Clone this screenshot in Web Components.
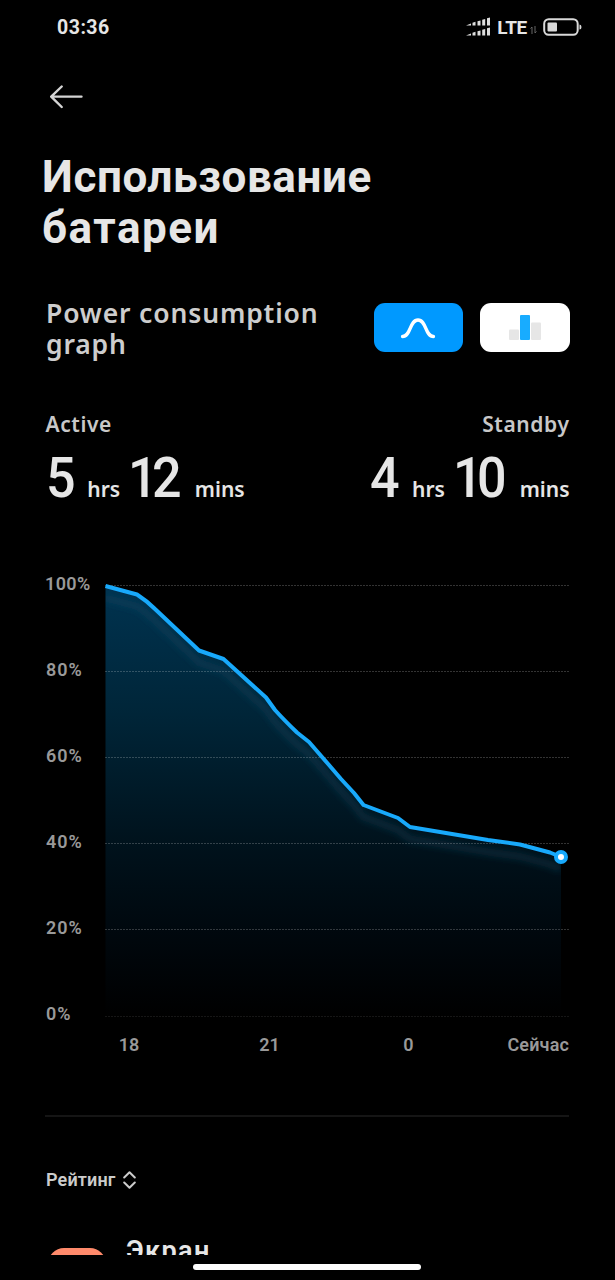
<!DOCTYPE html>
<html lang="ru">
<head>
<meta charset="utf-8">
<title>Использование батареи</title>
<style>
  html, body {
    margin: 0;
    background: #000;
  }

  body {
    width: 615px;
    height: 1280px;
    overflow: hidden;
    font-family: Roboto, "Liberation Sans", sans-serif;
    color: #e6e6e6;
  }
</style>
</head>
<body>
<battery-screen></battery-screen>

<script>
// Attaches an open shadow root and fills it with the given markup
function render(element, html) {
  element.attachShadow({ mode: 'open' }).innerHTML = html;
}

// Clock, signal and battery at the top of the screen
class StatusBar extends HTMLElement {
  constructor() {
    super();
    render(this, `
      <style>
        :host {
          display: flex;
          align-items: center;
          justify-content: space-between;
          box-sizing: border-box;
          height: 54px;
          padding: 0 33px 0 57px;
          font-weight: 700;
        }

        .time { font-size: 19.5px; letter-spacing: 0.5px; }
        .icons { display: flex; align-items: center; }
        .signal { margin-right: 7px; }
        .network { font-size: 19px; letter-spacing: -0.3px; }
        .data { margin: 6px 6px 0 3px; }
        svg { display: block; }
      </style>
      <span class="time"><slot></slot></span>
      <div class="icons">
        <svg class="signal" width="24" height="20" fill="#dedede">
          <path d="M0 8.500l5-2v2zM6.500 5.800l3-1v3.700h-3zM11.500 4.200l3-.8v5.100h-3zM16.200 2.700l3-.8v6.600h-3zM21 1.300l3-.8v8h-3z"/>
          <path d="M0 18.500l5-2v2zM6.500 15.800l3-1v3.700h-3zM11.500 14.200l3-.8v5.100h-3zM16.200 12.700l3-.8v6.600h-3zM21 11.300l3-.8v8h-3z"/>
        </svg>
        <span class="network">LTE</span>
        <svg class="data" width="7" height="8" fill="none" stroke="#666" stroke-width="1">
          <path d="M2 8V1L.5 2.5M5 0v7l1.500-1.500"/>
        </svg>
        <svg width="39" height="18">
          <rect x="1.200" y="1.200" width="33.500" height="15.600" rx="4.500" fill="none" stroke="#d9d9d9" stroke-width="2"/>
          <rect x="4.500" y="4.500" width="9.500" height="9" rx="1" fill="#d9d9d9"/>
          <path d="M36.500 6.500q2 0 2 2.500t-2 2.500z" fill="#d9d9d9"/>
        </svg>
      </div>
    `);
  }
}

class BackButton extends HTMLElement {
  constructor() {
    super();
    render(this, `
      <style>
        :host { display: block; }
        svg { display: block; }
      </style>
      <svg width="34" height="24" fill="none" stroke="#d4d4d4" stroke-width="2.400" stroke-linecap="round" stroke-linejoin="round">
        <path d="M31.500 11.600H1.500M11.700 1.500L1.200 11.600l10.500 10.400"/>
      </svg>
    `);
  }
}

// Pill holding a chart icon, blue while it is the selected one
class GraphToggle extends HTMLElement {
  constructor() {
    super();
    render(this, `
      <style>
        :host {
          display: flex;
          align-items: center;
          justify-content: center;
          width: 89.500px;
          height: 49px;
          border-radius: 11px;
          background: #fff;
        }

        :host([selected]) { background: #0099ff; }
      </style>
      <slot></slot>
    `);
  }
}

// A label over "5 hrs 12 mins"
class UsageTime extends HTMLElement {
  constructor() {
    super();
    render(this, `
      <style>
        :host { display: block; }

        .label {
          font: 600 21px/26px "Noto Sans", sans-serif;
          letter-spacing: 0.600px;
          color: #c8c8c8;
        }

        .value {
          display: flex;
          align-items: baseline;
          margin-top: 9px;
          line-height: 64px;
          white-space: nowrap;
        }

        /* slightly condensed digits */
        b {
          font-size: 56px;
          font-weight: 500;
          letter-spacing: -6px;
          transform: scaleX(0.930);
          transform-origin: 0 0;
        }

        span {
          font: 600 21px/26px "Noto Sans", sans-serif;
        }

        .hrs { margin: 0 8px 0 16px; }
        .mins { margin-left: 15px; }
        :host([align=end]) .label { text-align: right; }
      </style>
      <div class="label"><slot></slot></div>
      <div class="value">
        <b>${this.getAttribute('hours')}</b><span class="hrs">hrs</span>
        <b>${this.getAttribute('minutes')}</b><span class="mins">mins</span>
      </div>
    `);
  }
}

class BatteryChart extends HTMLElement {
  constructor() {
    super();
    const levels = [100, 80, 60, 40, 20, 0];
    const line = 'M.500 1L32 9.500Q42 16 50 24L94 65.500L118.500 74L161 112.500' +
      'L170 125Q179 135 192 147.500L204 157L224 180L236 194L249 208L258.500 220' +
      'L293 233L305 242L383 255L415 259.500L445 267.500L456 272';
    const grid = levels.map((level, i) =>
      `<path d="M0 ${Math.floor(i * 86.2) + 0.5}H464" opacity="${i === 5 ? 0.35 : 0.8}"/>`).join('');

    render(this, `
      <style>
        :host {
          display: grid;
          grid-template-columns: 59px 464px;
          color: #999;
          font-size: 18px;
          font-weight: 600;
        }

        .levels span {
          display: block;
          height: 86px;
          line-height: 22px;
          letter-spacing: 1px;
        }

        .levels span:first-child { letter-spacing: 0.400px; margin-left: -1px; }
        .levels span:last-child { height: 22px; }

        svg {
          display: block;
          overflow: visible;
          margin-top: 12px;
        }

        .hours {
          grid-column: 2;
          display: grid;
          grid-template-columns: 48px 233px 45px 1fr;
          margin-top: 9px;
          line-height: 22px;
          text-align: center;
        }

        .hours :last-child { text-align: right; letter-spacing: 0.150px; }
      </style>
      <div class="levels">${levels.map(level => `<span>${level}%</span>`).join('')}</div>
      <svg width="464" height="431">
        <defs>
          <linearGradient id="fill" x1="0" y1="0" x2="0" y2="1">
            <stop offset="0" stop-color="#003350"/>
            <stop offset="0.300" stop-color="#002538"/>
            <stop offset="0.600" stop-color="#00121c"/>
            <stop offset="0.800" stop-color="#00080e"/>
            <stop offset="1" stop-color="#000"/>
          </linearGradient>
          <clipPath id="area"><path d="${line}V431H.500z"/></clipPath>
          <filter id="soft" x="-10%" y="-10%" width="120%" height="130%">
            <feGaussianBlur stdDeviation="3"/>
          </filter>
        </defs>
        <path d="${line}V431H.500z" fill="url(#fill)"/>
        <g clip-path="url(#area)">
          <path d="${line}" transform="translate(0 12)" fill="none" stroke="#15506a" stroke-opacity="0.300" stroke-width="8" filter="url(#soft)"/>
        </g>
        <g stroke="#fff" stroke-opacity="0.250" stroke-dasharray="2 1">${grid}</g>
        <path d="${line}" fill="none" stroke="#18a9fb" stroke-width="4" stroke-linejoin="round"/>
        <circle cx="456" cy="272" r="5" fill="#fff" stroke="#18a9fb" stroke-width="4"/>
      </svg>
      <div class="hours"><span>18</span><span>21</span><span>0</span><span>Сейчас</span></div>
    `);
  }
}

// Row of the rating list: icon tile and the name next to it
class RatingItem extends HTMLElement {
  constructor() {
    super();
    render(this, `
      <style>
        :host {
          display: flex;
          gap: 20px;
          font-size: 27px;
          font-weight: 600;
          line-height: 32px;
          letter-spacing: 1.400px;
        }

        i {
          width: 58px;
          height: 58px;
          margin-top: 13px;
          border-radius: 16px;
          background: #ff8a6b;
        }
      </style>
      <i></i><span><slot></slot></span>
    `);
  }
}

class BatteryScreen extends HTMLElement {
  constructor() {
    super();
    render(this, `
      <style>
        :host {
          display: flex;
          flex-direction: column;
          width: 615px;
          height: 1280px;
          background: #000;
        }

        back-button { margin: 31px 0 0 50px; }

        h1 {
          margin: 43px 0 0 42px;
          font-size: 44px;
          font-weight: 700;
          line-height: 51px;
          letter-spacing: 0.600px;
        }

        h1 span { letter-spacing: 1.500px; }

        .graph {
          display: flex;
          gap: 17px;
          margin: 49px 45.500px 0 46px;
        }

        h2 {
          flex: 1;
          margin: -5px 0 0;
          font: 600 26.500px/30.500px "Noto Sans", sans-serif;
          letter-spacing: 0.850px;
          white-space: nowrap;
          color: #cdcdcd;
        }

        .times {
          display: flex;
          justify-content: space-between;
          margin: 52px 45.500px 0 45.500px;
        }

        battery-chart { margin: 63px 0 0 46px; }

        hr {
          width: 524px;
          height: 2px;
          margin: 59px 0 0 45px;
          border: 0;
          background: #151515;
        }

        .sort {
          display: flex;
          align-items: center;
          gap: 7px;
          margin: 52px 0 0 46px;
          font-size: 18px;
          font-weight: 600;
          line-height: 22px;
          letter-spacing: 0.150px;
          color: #ccc;
        }

        .list {
          height: 20px;
          margin: 44px 0 0 48px;
          overflow: hidden;
        }

        .home {
          width: 228px;
          height: 6px;
          margin: 9px 0 0 193px;
          border-radius: 3px;
          background: #fff;
        }
      </style>
      <status-bar>03:36</status-bar>
      <back-button></back-button>
      <h1>Использование<br><span>батареи</span></h1>
      <div class="graph">
        <h2>Power consumption<br>graph</h2>
        <graph-toggle selected>
          <svg width="36" height="22" fill="none" stroke="#fff" stroke-width="3.300" stroke-linecap="round">
            <path d="M2.500 19.500C11 19.500 9.500 3 18 3s7 16.500 15.500 16.500"/>
          </svg>
        </graph-toggle>
        <graph-toggle>
          <svg width="32" height="25">
            <rect x="0" y="14.500" width="10" height="10.500" rx="1" fill="#e6e6e6"/>
            <rect x="22" y="7.500" width="10" height="17.500" rx="1" fill="#e6e6e6"/>
            <rect x="11" y="0" width="10" height="25" rx="1" fill="#18acff"/>
          </svg>
        </graph-toggle>
      </div>
      <div class="times">
        <usage-time hours="5" minutes="12">Active</usage-time>
        <usage-time hours="4" minutes="10" align="end">Standby</usage-time>
      </div>
      <battery-chart></battery-chart>
      <hr>
      <div class="sort">
        <span>Рейтинг</span>
        <svg width="14" height="18" fill="none" stroke="#ccc" stroke-width="2" stroke-linecap="round" stroke-linejoin="round">
          <path d="M1.200 6.500L6.500 1.300l5.300 5.200M1.200 11.500L6.500 16.700l5.300-5.200"/>
        </svg>
      </div>
      <div class="list"><rating-item>Экран</rating-item></div>
      <div class="home"></div>
    `);
  }
}

customElements.define('status-bar', StatusBar);
customElements.define('back-button', BackButton);
customElements.define('graph-toggle', GraphToggle);
customElements.define('usage-time', UsageTime);
customElements.define('battery-chart', BatteryChart);
customElements.define('rating-item', RatingItem);
customElements.define('battery-screen', BatteryScreen);
</script>
</body>
</html>
